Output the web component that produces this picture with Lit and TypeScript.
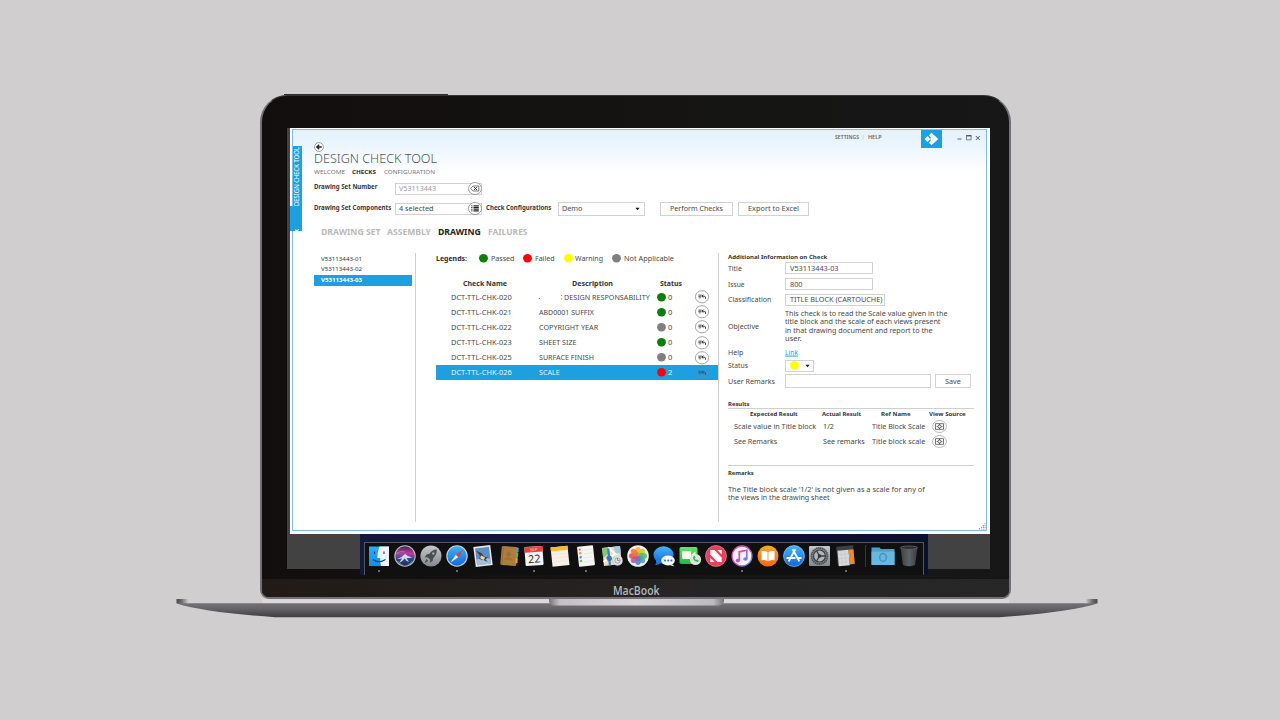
import { LitElement, html, svg, css } from "lit";
import { customElement, property } from "lit/decorators.js";
import { classMap } from "lit/directives/class-map.js";

/** A single line of text stretched to a set width. */
@customElement("fit-text")
class FitText extends LitElement {
  @property({ type: Number }) w = 0;
  static styles = css`
    :host { display: block; white-space: nowrap; }
    .inner { display: inline-block; transform-origin: 0 50%; vertical-align: top; text-decoration: inherit; }
  `;
  render() {
    return html`<span class="inner"><slot></slot></span>`;
  }
  firstUpdated() {
    const el = this.renderRoot.querySelector(".inner") as HTMLElement;
    const box = el.getBoundingClientRect();
    // Inside a quarter-turned parent the line's length is the box's height.
    const turned = Math.abs(el.offsetWidth - box.width) > 1.5;
    const natural = turned ? box.height : box.width;
    this.style.width = `${this.w}px`;
    if (natural > 0) el.style.transform = `translateY(var(--drop, .6px)) scaleX(${this.w / natural})`;
  }
}

const t = (text: string, w: number, cls = "") => html`<fit-text class=${cls} .w=${w}>${text}</fit-text>`;

const legend: [string, string, number][] = [
  ["green", "Passed", 23.5],
  ["red", "Failed", 19.5],
  ["yellow", "Warning", 28],
  ["gray", "Not Applicable", 50],
];

const checks = [
  { name: "DCT-TTL-CHK-020", desc: "DESIGN RESPONSABILITY", w: 85.7, status: "green", n: "0" },
  { name: "DCT-TTL-CHK-021", desc: "ABD0001 SUFFIX", w: 55, status: "green", n: "0" },
  { name: "DCT-TTL-CHK-022", desc: "COPYRIGHT YEAR", w: 59.2, status: "gray", n: "0" },
  { name: "DCT-TTL-CHK-023", desc: "SHEET SIZE", w: 37.5, status: "green", n: "0" },
  { name: "DCT-TTL-CHK-025", desc: "SURFACE FINISH", w: 55, status: "gray", n: "0" },
  { name: "DCT-TTL-CHK-026", desc: "SCALE", w: 20.7, status: "red", n: "2" },
];

const dot = (c: string) => html`<svg class="dot ${c}" width="9" height="9" viewBox="0 0 9 9"><ellipse cx="4.500" cy="4.300" rx="4.450" ry="4.200" /></svg>`;

const rowIcon = (sel: boolean) => html`
  <svg width="14" height="14" viewBox="0 0 14 14">
    <ellipse cx="7" cy="6.800" rx="6.600" ry="6.100" fill=${sel ? "#2b9bd6" : "#fff"} stroke=${sel ? "#3f93c4" : "#8c8c8c"} stroke-width=".8" />
    <path d="M3.300 5h3.600M3.300 6.600h2.400M4.300 5v3.600M5.700 5v3.400" fill="none" stroke=${sel ? "#1c6c98" : "#555"} stroke-width=".7" />
    <path d="M6.800 6.200h2.400q1.800 0 1.300 2.600M8.400 4.700L6.900 6.200l1.500 1.400" fill="none" stroke=${sel ? "#17506f" : "#222"} stroke-width=".9" />
  </svg>`;

const sourceIcon = html`
  <svg width="15" height="13" viewBox="0 0 15 13">
    <ellipse cx="7.5" cy="6.5" rx="6.9" ry="6" fill="#fff" stroke="#999" stroke-width=".7" />
    <rect x="3.6" y="3.7" width="7.8" height="5.6" fill="none" stroke="#555" stroke-width=".8" />
    <circle cx="7.5" cy="6.5" r="1.6" fill="none" stroke="#444" stroke-width=".9" />
    <path d="M7.5 4v1M7.5 8v1M4.6 6.5h1M9.4 6.5h1" stroke="#444" stroke-width=".8" />
  </svg>`;

const caret = html`<svg width="5" height="4" viewBox="0 0 5 4"><path d="M.4 .7h4.200L2.500 3.200z" fill="#111" /></svg>`;

const defs = svg`<defs>
  <linearGradient id="blue" x2="0" y2="1"><stop stop-color="#42b4f8"/><stop offset="1" stop-color="#1167dc"/></linearGradient>
  <linearGradient id="finder" x2="0" y2="1"><stop stop-color="#23b4f8"/><stop offset="1" stop-color="#168be8"/></linearGradient>
  <linearGradient id="silver" x2="0" y2="1"><stop stop-color="#c5c8ca"/><stop offset="1" stop-color="#85898c"/></linearGradient>
  <linearGradient id="siri" x2="0" y2="1"><stop stop-color="#3a2258"/><stop offset=".38" stop-color="#c63a98"/><stop offset=".6" stop-color="#3a4a90"/><stop offset="1" stop-color="#1b2748"/></linearGradient>
  <linearGradient id="note" x2="1" y2="1"><stop stop-color="#ee4b78"/><stop offset=".5" stop-color="#c155cf"/><stop offset="1" stop-color="#4c98ee"/></linearGradient>
  <linearGradient id="orange" x2="0" y2="1"><stop stop-color="#faa831"/><stop offset="1" stop-color="#ed6b17"/></linearGradient>
  <linearGradient id="green" x2="0" y2="1"><stop stop-color="#65e56c"/><stop offset="1" stop-color="#1fbd3c"/></linearGradient>
  <linearGradient id="trash" x2="1"><stop stop-color="#3c4044"/><stop offset=".5" stop-color="#5d6266"/><stop offset="1" stop-color="#3a3e42"/></linearGradient>
</defs>`;

const petals = ["#f8b62c", "#b9cf3a", "#58b868", "#42a6a8", "#4a7fd0", "#9a63b4", "#dd4f6a", "#f0743a"];

const dockIcons: { art: unknown; dot?: boolean }[] = [
  { dot: true, art: svg`<rect x="2" y="2.500" width="20" height="19.500" fill="url(#finder)"/><path d="M12.500 2.500H22V22h-8q-1-4-.8-8h-3Q10.400 8 12.500 2.500z" fill="#edf3f9"/><path d="M7.500 7.500v2.400M17 7.500v2.400M6 15.500q6 4.500 12.500 0" fill="none" stroke="#223c60" stroke-width="1.100"/>` },
  { art: svg`<circle cx="12" cy="12" r="10.200" fill="url(#siri)" stroke="#bcbcc4" stroke-width="1.100"/><path d="M4 15q5-1.500 8-5 3 3 7.500 3.500-4 .8-6 .8l2.500 3.700q-3-1-4.300-3.500Q9.500 17.500 6 19l3-4.500z" fill="#dff5fb" opacity=".85"/><path d="M4.500 17q2 3 5 4M19.500 17q-2 3-5 4M3.500 10q4-4 8.500-2" fill="none" stroke="#35b8c8" stroke-width="1.200" opacity=".65"/>` },
  { art: svg`<circle cx="12" cy="12" r="10.600" fill="url(#silver)"/><path d="M17.800 5.600q-5 .2-7.300 4.200l-3 .6-1.700 3 2.800-.2 2.700 2.600-.5 3 2.900-1.900.5-3q3.800-2.800 3.600-8.300zM7.300 15l-1.600 4 3.600-1.900z" fill="#484d51"/><circle cx="14.300" cy="9.500" r="1.200" fill="#a6aaad"/>` },
  { dot: true, art: svg`<circle cx="12" cy="12" r="10.200" fill="url(#blue)" stroke="#ced3d9" stroke-width="1.100"/><path d="M18.500 5.500L10.800 10.800l2.400 2.500z" fill="#ec3b35"/><path d="M5.500 18.500l5.300-7.700 2.400 2.500z" fill="#f2f2f4"/>` },
  { art: svg`<g transform="rotate(-7 12 12)"><rect x="3.500" y="2" width="17" height="20" fill="#eeeae2"/><rect x="5" y="3.500" width="14" height="17" fill="#5990cb"/><path d="M5 20.500V15q7-3 14 1v4.500z" fill="#a3bfd9"/><path d="M6 6l5 3 2 4 4 1-3 1.500 2 3-4-2.500-4-1.500 1-3z" fill="#503a26"/><path d="M10 11l4 3-2 2-3-2z" fill="#ded9ce"/></g>` },
  { art: svg`<g transform="rotate(5 12 12)"><rect x="4" y="2.500" width="16" height="19" rx="1.400" fill="#ad7d3d"/><path d="M19 3h2v4.500h-2z" fill="#53a7d4"/><path d="M19 8h2v5h-2z" fill="#63b557"/><path d="M19 13.500h2v5h-2z" fill="#e2a63b"/><circle cx="11.500" cy="10" r="2.500" fill="#9d7036"/><path d="M7 16q4.500-6 9 0z" fill="#9d7036"/><path d="M5.500 3v18" stroke="#8e642c" stroke-width=".7"/></g>` },
  { dot: true, art: svg`<g transform="rotate(-4 12 12)"><rect x="3" y="2.500" width="18" height="19" rx="1" fill="#f5f3f2"/><path d="M3 2.500h18V8H3z" fill="#e8403c"/><text x="12" y="7" font-size="4.200" text-anchor="middle" fill="#ffd8d4">SEP</text><text x="12" y="18.800" font-size="11" text-anchor="middle" fill="#333">22</text></g>` },
  { art: svg`<g transform="rotate(-6 12 12)"><rect x="3.500" y="2.500" width="17" height="19.500" fill="#f5f1e6"/><rect x="3.500" y="2.500" width="17" height="4" fill="#f5bd2e"/><path d="M4 10h16M4 13.500h16M4 17h16" stroke="#e3dfd2" stroke-width=".4"/></g>` },
  { dot: true, art: svg`<g transform="rotate(-6 12 12)"><rect x="4" y="2" width="16" height="20" rx=".8" fill="#f6f5f3"/><circle cx="6.500" cy="5" r="1" fill="#e8504a"/><circle cx="6.500" cy="8.600" r="1.300" fill="#f1983a"/><circle cx="6.500" cy="12.600" r="1.300" fill="#3b9eea"/><circle cx="6.500" cy="16.400" r="1.300" fill="#65c052"/><path d="M9.500 5.500h9M9.500 9.500h9M9.500 13.500h9M9.500 17.500h9" stroke="#ddd" stroke-width=".5"/></g>` },
  { art: svg`<g transform="rotate(-6 12 12)"><rect x="3" y="3" width="18" height="18" fill="#eadfb8"/><path d="M3 3h6v6l-6 4z" fill="#85c575"/><path d="M14 3h7v7h-5z" fill="#9fcbe6"/><path d="M9 3l7 8 5 4M3 17l13-7" fill="none" stroke="#fff" stroke-width="2"/><path d="M9 4v17" stroke="#3f7ec6" stroke-width="2.200"/><circle cx="9" cy="14" r="2.800" fill="#3b75c1"/></g><circle cx="17.500" cy="16.500" r="5" fill="#e3e5e7" stroke="#b0b4b6" stroke-width=".5"/><circle cx="17.500" cy="16.500" r="2.700" fill="none" stroke="#84898d" stroke-width=".7"/><path d="M17.500 14v2.500h2" fill="none" stroke="#666" stroke-width=".7"/>` },
  { art: svg`<circle cx="12" cy="12" r="10.800" fill="#f1eeeb"/>${petals.map((c, i) => svg`<ellipse cx="12" cy="7.300" rx="2.900" ry="4.400" fill=${c} opacity=".88" transform=${`rotate(${i * 45} 12 12)`}/>`)}` },
  { art: svg`<ellipse cx="11.500" cy="11" rx="10" ry="8.800" fill="url(#blue)"/><path d="M4 16q1 3-1 5 5-.5 6.500-3z" fill="#1b78df"/><ellipse cx="16" cy="16.500" rx="6.800" ry="5" fill="#f5f7f9"/><path d="M20 20l2.500 2.500-5-1.500z" fill="#f5f7f9"/><circle cx="13" cy="16.500" r="1" fill="#3673c5"/><circle cx="16.200" cy="16.500" r="1" fill="#3673c5"/><circle cx="19.400" cy="16.500" r="1" fill="#3673c5"/>` },
  { art: svg`<rect x="1.500" y="3" width="18" height="17" rx="1.800" fill="url(#green)"/><rect x="4" y="7" width="9" height="8" rx="1.200" fill="#f4fff4"/><path d="M13.500 10.500L17.500 7.500v6.500l-4-2z" fill="#f4fff4"/><circle cx="17.500" cy="15.500" r="5.600" fill="#dfe4df"/><path d="M15 13q0 4.500 5 5l.8-1.600-1.800-1-1 .6q-1-.8-1.300-1.800l.8-.8-.8-1.700z" fill="#34b64c"/>` },
  { art: svg`<circle cx="12" cy="12" r="10.500" fill="#ec3d5b" stroke="#f1a3b0" stroke-width=".6"/><path d="M6.300 6v4.500L13.500 18h4.200v-4.300L10.500 6z" fill="#fff"/><path d="M13.300 6h4.400v4.500zM6.300 13.700V18h4.300z" fill="#fff"/>` },
  { dot: true, art: svg`<circle cx="12" cy="12" r="10" fill="#f8f1fa" stroke="url(#note)" stroke-width="1.300"/><path d="M9.300 16.500V7.800l7.500-1.600v8.600" fill="none" stroke="url(#note)" stroke-width="1.700"/><ellipse cx="7.900" cy="16.600" rx="2.200" ry="1.800" fill="#b65bd2"/><ellipse cx="15.400" cy="15" rx="2.200" ry="1.800" fill="#6b83e4"/>` },
  { art: svg`<circle cx="12" cy="12" r="10.500" fill="url(#orange)"/><path d="M11.600 8.200Q9 6.400 5.500 7.200v9q3.500-.8 6.100 1zM12.400 8.200q2.600-1.800 6.100-1v9q-3.500-.8-6.100 1z" fill="#fff"/>` },
  { art: svg`<circle cx="12" cy="12" r="10.500" fill="url(#blue)" stroke="#a9d5f6" stroke-width=".6"/><path d="M13 6L7 16.800M11 6l6 10.800M5.200 14h7.600M15.600 14h3.200" fill="none" stroke="#fff" stroke-width="1.800" stroke-linecap="round"/>` },
  { art: svg`<rect x="1" y="2" width="21" height="20" rx="1" fill="url(#silver)"/><circle cx="11.500" cy="12" r="8" fill="#8b8f92" stroke="#4a4e51" stroke-width="1.800" stroke-dasharray="1.500 .5"/><circle cx="11.500" cy="12" r="6" fill="#b2b5b8" stroke="#3a3e41" stroke-width="1.200"/><path d="M11.500 12h5.500M11.500 12L8.700 7M11.500 12L8.700 17" stroke="#3a3e41" stroke-width="1.300"/><circle cx="11.500" cy="12" r="1.700" fill="#2f3336"/>` },
  { dot: true, art: svg`<g transform="rotate(-5 12 12)"><rect x="3" y="2" width="17" height="19" fill="#3d3f42"/><path d="M4 6H15V21.500H4z" fill="#d7d8da"/><path d="M15 6h5V20.500h-5z" fill="#ef8a2b"/><path d="M4 10h11M4 14h11M4 18h11M7.500 6.500v15M11.200 6.500v15" stroke="#bcbec0" stroke-width=".4"/></g>` },
];

const dockTail = [
  svg`<path d="M.5 3.500h8l1.500 1.500h13.500V21H.5z" fill="#4c9fca"/><path d="M.5 7.500h23V21H.5z" fill="#67b8df"/><ellipse cx="12" cy="13.500" rx="3.300" ry="4" fill="none" stroke="#4695bf" stroke-width="1.500"/>`,
  svg`<path d="M3.500 3.500h17L18 21q-6 2.500-12 0z" fill="url(#trash)"/><ellipse cx="12" cy="3.700" rx="8.600" ry="1.700" fill="#2c2f32" stroke="#6b7074" stroke-width=".7"/>`,
];

@customElement("app-root")
class AppRoot extends LitElement {
  static styles = css`
    :host { display: block; }
    * { box-sizing: border-box; }
    svg { display: block; flex: none; }
    .stage { width: 1280px; height: 720px; overflow: hidden; background: #d1cecf; display: flex; flex-direction: column; padding-top: 94px;
      font-family: "Noto Sans", "Open Sans", sans-serif; color: #484848; font-size: 6.6px; line-height: 8.5px; }
    .lip { margin-left: 284px; width: 164px; height: 1px; background: #2e2d2f; flex: none; }
    .lid { margin-left: 260px; width: 751px; height: 504px; border-radius: 27px 27px 9px 9px; border: 2px solid #737177; border-top: 1px solid #343335; padding-top: 1px;
      background: linear-gradient(90deg, #120e0d, #141312 40%, #171717); overflow: hidden; display: flex; flex-direction: column; flex: none; }
    .screen { margin: 31px 0 0 25px; width: 703px; height: 441px; background: #424242; display: flex; flex-direction: column; flex: none; }
    .window { margin-left: 3px; width: 700px; height: 406px; background: #fff; padding: 1px 3px 3px 2px; flex: none; }
    .frame { height: 402px; border: 1px solid #7dbfe3; background: linear-gradient(#e3f2fc 0, #eaf5fd 14px, #fff 42px); display: flex; position: relative; }
    .side { width: 9px; flex: none; margin-top: 16px; height: 85px; background: #1d9fe0; position: relative; color: #fff; --drop: .3px; }
    .side-text { position: absolute; left: -1px; top: 60px; height: 9px; line-height: 9px; font-size: 7.6px; transform: rotate(-90deg); transform-origin: 0 0; }
    .side-tab { position: absolute; left: -3px; top: 60px; width: 12px; height: 25px; background: #1d9fe0; overflow: hidden; }
    .main { flex: 1; display: flex; flex-direction: column; min-width: 0; }
    .head { height: 48px; display: flex; }
    .brand { width: 521px; padding: 12px 0 0 11.500px; flex: none; display: flex; flex-direction: column; }
    .title { font-size: 12.2px; line-height: 13px; font-weight: 300; color: #555; margin-top: -.5px; --drop: .3px; }
    .nav { display: flex; gap: 7.700px; font-size: 6px; line-height: 8px; margin-top: 2.500px; color: #777; }
    .bold { font-weight: 700; color: #2d2d2d; }
    .meta { margin: 2.500px 0 0 12px; height: 8px; line-height: 8px; display: flex; font-size: 5px; font-weight: 600; color: #666; width: 86px; --drop: .4px; }
    .meta .sep { color: #bbb; font-weight: 400; width: 8.500px; text-align: center; }
    .logo { width: 21px; height: 18px; background: #1d9fe0; }
    .win { margin: 3px 0 0 15px; }
    .row { display: grid; align-items: center; padding-left: 11.500px; flex: none; }
    .r1 { height: 21px; grid-template-columns: 81.500px 88px; }
    .r2 { height: 19px; grid-template-columns: 81.500px 90.500px 72.500px 101.500px 78.500px 71px; }
    .lbl { font-size: 6.1px; font-weight: 700; color: #383838; }
    .r2 .lbl { --drop: .3px; }
    .up { margin-bottom: 4px; }
    .box { border: 1px solid #d2d2d2; background: #fff; height: 12px; display: flex; align-items: center; padding-left: 3.300px; }
    .combo { justify-content: space-between; width: 87px; }
    .combo svg { margin-right: -1px; }
    .dim { color: #999; }
    .field { font-size: 6.8px; }
    .btn { height: 14px; padding: 0; justify-content: center; font-size: 6.8px; }
    .pc { width: 73px; } .pe { width: 70.500px; }
    .sel { height: 14px; width: 87px; justify-content: space-between; padding-right: 4px; font-size: 6.8px; }
    .tabs { height: 28px; display: flex; align-items: center; gap: 7px; padding-left: 18.500px; font-size: 8.8px; line-height: 12px; font-weight: 700; color: #b9b9b9; flex: none; --drop: .2px; }
    .on { color: #222; }
    .body { margin-top: 7px; height: 269px; padding-left: 12px; display: grid; grid-template-columns: 101px 303px 268px; }
    .list { padding-top: .5px; width: 98px; --drop: .3px; }
    .li { height: 10.5px; display: flex; align-items: center; padding-left: 6.500px; font-size: 6px; color: #333; }
    .li.cur { background: #1d9fe0; color: #fff; font-weight: 700; margin-top: .5px; }
    .mid, .info { border-left: 1px solid #d0d0d0; min-width: 0; }
    .legend { height: 10px; display: flex; align-items: center; padding-left: 20.200px; gap: 9px; font-size: 6.8px; }
    .key { display: flex; align-items: center; gap: 3px; }
    .key:nth-child(2) { margin-left: 2.800px; }
    .dot { margin-right: -.2px; }
    .green { fill: #0a800a; } .red { fill: #fb0207; } .yellow { fill: #ff0; } .gray { fill: #808080; }
    .thead { margin-top: 13.200px; height: 13.5px; display: grid; align-items: center; grid-template-columns: 108.900px 88.100px 60px; padding-left: 46.900px; font-size: 6.8px; font-weight: 700; color: #333; }
    .tr { height: 15.1px; margin-left: 20px; display: grid; align-items: center; grid-template-columns: 87.400px 118.300px 11.300px 27px 14px; padding-left: 15.200px; }
    .tr.cur { background: #1d9fe0; color: #e6f5fd; }
    .desc { display: flex; }
    .desc .lead { width: 22px; } .desc .cut { width: 3.500px; overflow: hidden; }
    .info { padding-left: 8.500px; font-size: 6.7px; }
    .h { font-size: 5.9px; font-weight: 700; color: #333; line-height: 7.400px; }
    .f { display: grid; grid-template-columns: 57.800px 1fr; align-items: center; height: 15.7px; }
    .f .box { justify-self: start; width: 87.300px; }
    .f .wide { width: 99.500px; }
    .f.obj { height: 39px; --drop: .4px; } .f.help { height: 11.4px; }
    .link { color: #2e9fe0; text-decoration: underline; }
    .f .pick { width: 29px; padding-right: 3px; justify-content: space-between; }
    .edit { display: flex; gap: 4.500px; }
    .f .remark { width: 145.500px; height: 13.5px; }
    .f .save { width: 35.500px; padding: 0; justify-content: center; height: 14px; }
    .res { margin-top: 11px; height: 9px; border-bottom: 1px solid #cfcfcf; width: 246px; }
    .rh { display: grid; grid-template-columns: 72.700px 59px 47.300px 40px; padding-left: 22.300px; height: 9.3px; align-items: center; font-size: 5.9px; font-weight: 700; color: #333; --drop: .1px; }
    .rr { display: grid; grid-template-columns: 88.800px 49px 60.300px 15px; padding-left: 6.300px; height: 15.2px; align-items: center; }
    .rem { margin-top: 16.100px; border-top: 1px solid #cfcfcf; width: 246px; padding-top: 3.800px; --drop: .3px; }
    .note { margin-top: 7.700px; --drop: .5px; }
    .grip { position: absolute; right: 0; bottom: 0; }
    .dock { margin-left: 73px; width: 568px; height: 41px; background: linear-gradient(90deg, #14183a, #0a0f2c); padding: 8px 4px 0; flex: none; }
    .tray { height: 33px; border: 1px solid #56575c; border-bottom: 0; background: #101010; display: flex; padding: 0 0 0 1px; width: 560px; }
    .app { width: 25.930px; display: flex; flex-direction: column; align-items: center; flex: none; padding-top: .5px; }
    .run { width: 2px; height: 2px; border-radius: 50%; background: #8a8a8a; margin-top: 2px; }
    .rule { width: 1px; height: 22px; background: #3b3633; margin: 2px 5px 0 6px; flex: none; }
    .chin { margin-top: 10px; height: 22px; background: linear-gradient(90deg, #211a16, #262525 60%, #272727); display: flex; justify-content: center; padding-top: 3.400px; flex: none; }
    .mac { font-family: "Open Sans", "Noto Sans", sans-serif; font-size: 11.8px; line-height: 14px; font-weight: 600; color: #b9b9ba; margin-right: -2px; }
    .deck { margin: -2px 0 0 170px; }
  `;

  render() {
    return html`<div class="stage">
      <div class="lip"></div>
      <div class="lid">
        <div class="screen">
          <div class="window"><div class="frame">
            <div class="side">
              <div class="side-text">${t("DESIGN CHECK TOOL", 59)}</div>
              <div class="side-tab"><svg width="12" height="25"><path d="M5 24q2.500 1.200 4-.5" fill="none" stroke="#fff"/></svg></div>
            </div>
            <div class="main">
              ${this.header()} ${this.filters()}
              <div class="body">
                <div class="list">
                  <div class="li">${t("V53113443-01", 41)}</div>
                  <div class="li">${t("V53113443-02", 41)}</div>
                  <div class="li cur">${t("V53113443-03", 41)}</div>
                </div>
                ${this.table()} ${this.info()}
              </div>
            </div>
            <svg class="grip" width="8" height="7"><path d="M1.500 5v1.500M3.500 4v2.500M5.500 2v4.500M7 0v6.500" stroke="#8a97a0" stroke-width="1" stroke-dasharray="1.200 .7"/></svg>
          </div></div>
          ${this.dock()}
        </div>
        <div class="chin">${t("MacBook", 46.5, "mac")}</div>
      </div>
      <svg class="deck" width="940" height="24" viewBox="170 597 940 24">
        <defs>
          <linearGradient id="base" x2="0" y2="1"><stop stop-color="#77747a"/><stop offset=".45" stop-color="#656268"/><stop offset="1" stop-color="#403d41"/></linearGradient>
          <linearGradient id="notch"><stop stop-color="#77757a"/><stop offset=".06" stop-color="#c2c0c4"/><stop offset=".5" stop-color="#d8d6d9"/><stop offset=".94" stop-color="#bcbabe"/><stop offset="1" stop-color="#77757a"/></linearGradient>
          <linearGradient id="tipl"><stop stop-color="#4c494c"/><stop offset=".4" stop-color="#6c696c"/><stop offset="1" stop-color="#d1cecf"/></linearGradient>
          <linearGradient id="tipr"><stop stop-color="#d1cecf"/><stop offset=".6" stop-color="#6c696c"/><stop offset="1" stop-color="#4c494c"/></linearGradient>
        </defs>
        <path d="M262 599.300H1009V604H262z" fill="#dbd9db"/>
        <path d="M176.500 602l12 1.300h897l12-1.300v1.500q-30 9-98.500 13.700H275q-69-4.700-98.500-13.700z" fill="url(#base)"/>
        <path d="M176.500 599h12v4.300h-8q-4 0-4-1z" fill="url(#tipl)"/>
        <path d="M1097.500 599h-12v4.300h8q4 0 4-1z" fill="url(#tipr)"/>
        <path d="M549 599h175v2.500q-1 4-6 4H555q-5 0-6-4z" fill="url(#notch)"/>
      </svg>
    </div>`;
  }

  header() {
    return html`<div class="head">
      <div class="brand">
        <svg width="10" height="10" viewBox="0 0 10 10"><circle cx="5" cy="5" r="4.400" fill="#fff" stroke="#777" stroke-width=".7"/><path d="M7.800 5H3M5.200 2.700L2.700 5l2.500 2.300" fill="none" stroke="#222" stroke-width="1.300"/></svg>
        ${t("DESIGN CHECK TOOL", 123, "title")}
        <div class="nav">${t("WELCOME", 31)}${t("CHECKS", 24, "bold")}${t("CONFIGURATION", 51)}</div>
      </div>
      <div class="meta">${t("SETTINGS", 24)}<span class="sep">|</span>${t("HELP", 13.5)}</div>
      <div class="logo"><svg width="21" height="18" viewBox="0 0 21 18"><path d="M10.500 2.800L17.300 9l-6.800 6.200L8 12.700 10.800 9 8 5.300z" fill="#fff"/><path d="M6.500 6L9.300 9l-2.800 3-2.800-3z" fill="#fff"/><path d="M8.800 6.500L10.800 9l-2 2.500" fill="none" stroke="#1d9fe0" stroke-width=".8"/><path d="M9.500 7.500h3v3h-3z" fill="#fff"/></svg></div>
      <svg class="win" width="26" height="10" viewBox="0 0 26 10"><path d="M.5 6h4" stroke="#666" stroke-width="1.200"/><path d="M9.500 2.800h4.600v4H9.500z" fill="none" stroke="#666" stroke-width=".8"/><path d="M9.200 2.600h5.200" stroke="#555" stroke-width="1.300"/><path d="M18.800 3l4 4M22.800 3l-4 4" stroke="#555" stroke-width="1"/></svg>
    </div>`;
  }

  filters() {
    return html`
      <div class="row r1">
        ${t("Drawing Set Number", 63.5, "lbl up")}
        <div class="box combo field dim">${t("V53113443", 37)}
          <svg width="14" height="13" viewBox="0 0 14 13"><ellipse cx="7" cy="6.500" rx="6.500" ry="6" fill="#fff" stroke="#777" stroke-width=".7"/><path d="M2.800 6.500L5 4h5.800v5H5z" fill="none" stroke="#555" stroke-width=".8"/><path d="M6 5l3 3M9 5L6 8" stroke="#333" stroke-width=".9"/></svg>
        </div>
      </div>
      <div class="row r2">
        ${t("Drawing Set Components", 77.3, "lbl")}
        <div class="box combo field">${t("4 selected", 34.5)}
          <svg width="14" height="13" viewBox="0 0 14 13"><ellipse cx="7" cy="6.500" rx="6.500" ry="6" fill="#fff" stroke="#777" stroke-width=".7"/><path d="M5.500 3.800h5.300M5.500 5.500h5.300M5.500 7.200h5.300M5.500 8.900h5.300" stroke="#222" stroke-width="1.200"/><path d="M3.200 3.800h1.300M3.200 5.500h1.300M3.200 7.200h1.300M3.200 8.900h1.300" stroke="#222" stroke-width=".9"/></svg>
        </div>
        ${t("Check Configurations", 65.3, "lbl")}
        <div class="box sel">${t("Demo", 20.5)}${caret}</div>
        <div class="box btn pc">${t("Perform Checks", 53)}</div>
        <div class="box btn pe">${t("Export to Excel", 51)}</div>
      </div>
      <div class="tabs">${t("DRAWING SET", 59.5)}${t("ASSEMBLY", 44)}${t("DRAWING", 42.7, "on")}${t("FAILURES", 39.5)}</div>`;
  }

  table() {
    return html`<div class="mid">
      <div class="legend">${t("Legends:", 31, "bold")}${legend.map(([c, l, w]) => html`<div class="key">${dot(c)}${t(l, w)}</div>`)}</div>
      <div class="thead">${t("Check Name", 44)}${t("Description", 41)}${t("Status", 22)}</div>
      ${checks.map((c, i) => {
        const cur = i === checks.length - 1;
        return html`<div class=${classMap({ tr: true, cur })}>
          ${t(c.name, 60.7)}
          <div class="desc">${i === 0 ? html`<span class="lead">.</span><span class="cut">;</span>` : ""}${t(c.desc, c.w)}</div>
          ${dot(c.status)}${t(c.n, 4.3)}${rowIcon(cur)}
        </div>`;
      })}
    </div>`;
  }

  info() {
    return html`<div class="info">
      <div class="h">${t("Additional Information on Check", 99.3)}</div>
      <div class="f">${t("Title", 13.8)}<div class="box">${t("V53113443-03", 48.5)}</div></div>
      <div class="f">${t("Issue", 16.5)}<div class="box">${t("800", 12.5)}</div></div>
      <div class="f">${t("Classification", 43.5)}<div class="box wide">${t("TITLE BLOCK (CARTOUCHE)", 92.5)}</div></div>
      <div class="f obj">${t("Objective", 31)}<div>
        ${t("This check is to read the Scale value given in the", 162.5)}
        ${t("title block and the scale of each views present", 155.5)}
        ${t("in that drawing document and report to the", 147.5)}
        ${t("user.", 16.5)}</div></div>
      <div class="f help">${t("Help", 15.5)}${t("Link", 13, "link")}</div>
      <div class="f">${t("Status", 20)}<div class="box pick">${dot("yellow")}${caret}</div></div>
      <div class="f">${t("User Remarks", 47)}<div class="edit"><div class="box remark"></div><div class="box save">${t("Save", 15.7)}</div></div></div>
      <div class="h res">${t("Results", 21.5)}</div>
      <div class="rh">${t("Expected Result", 47.7)}${t("Actual Result", 39)}${t("Ref Name", 29.5)}${t("View Source", 36.7)}</div>
      <div class="rr">${t("Scale value in Title block", 82)}${t("1/2", 11)}${t("Title Block Scale", 53.3)}${sourceIcon}</div>
      <div class="rr">${t("See Remarks", 43.3)}${t("See remarks", 41.8)}${t("Title block scale", 53.3)}${sourceIcon}</div>
      <div class="rem"><div class="h">${t("Remarks", 25.7)}</div>
        <div class="note">${t("The Title block scale '1/2' is not given as a scale for any of", 196.8)}${t("the views in the drawing sheet", 101.5)}</div></div>
    </div>`;
  }

  dock() {
    return html`<div class="dock"><div class="tray">
      ${dockIcons.map((a) => html`<div class="app"><svg width="24" height="24" viewBox="0 0 24 24">${defs}${a.art}</svg>${a.dot ? html`<span class="run"></span>` : ""}</div>`)}
      <span class="rule"></span>
      ${dockTail.map((a) => html`<div class="app"><svg width="24" height="24" viewBox="0 0 24 24">${defs}${a}</svg></div>`)}
    </div></div>`;
  }
}
